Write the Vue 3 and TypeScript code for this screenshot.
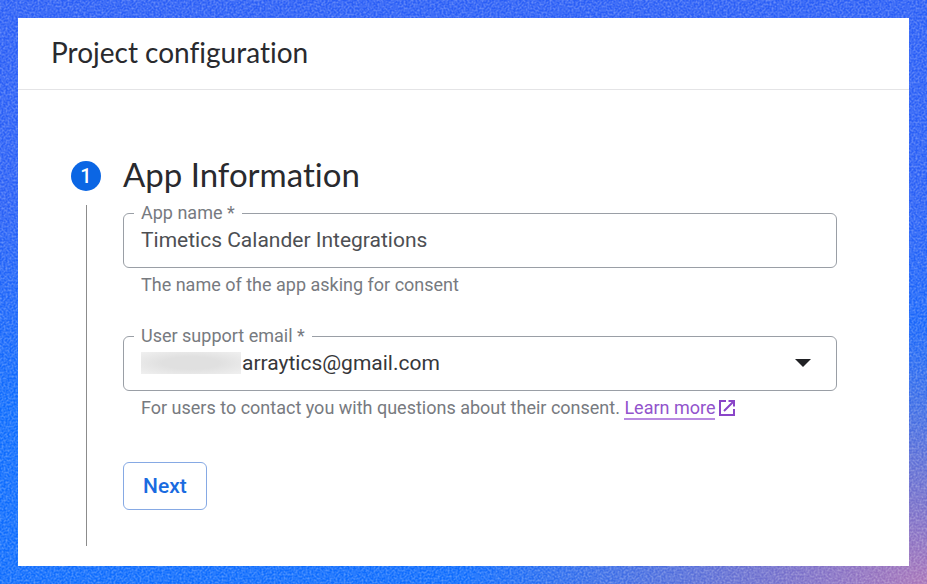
<script setup lang="ts">
import { ref } from 'vue'

const appName = ref('Timetics Calander Integrations')
const emails = ['arraytics@gmail.com']
const supportEmail = ref(emails[0])
</script>

<template>
  <div class="backdrop">
    <svg class="grain" aria-hidden="true">
      <filter id="grain" x="0" y="0" width="100%" height="100%">
        <feTurbulence type="fractalNoise" baseFrequency="0.5" numOctaves="2" />
        <feColorMatrix values="0 0 0 0 1  0 0 0 0 1  0 0 0 0 1  0.6 0 0 0 -0.2" />
      </filter>
      <rect width="100%" height="100%" filter="url(#grain)" />
    </svg>
    <main class="panel">
      <header class="bar">
        <h1>Project configuration</h1>
      </header>
      <form class="step" @submit.prevent>
        <div class="rail">
          <span class="badge">1</span>
          <span class="line"></span>
        </div>
        <div class="content">
          <h2>App Information</h2>
          <fieldset class="field">
            <legend><label for="app-name">App name *</label></legend>
            <div class="control">
              <input id="app-name" v-model="appName" type="text" />
            </div>
          </fieldset>
          <p class="hint">The name of the app asking for consent</p>
          <fieldset class="field">
            <legend><label for="email">User support email *</label></legend>
            <div class="control">
              <span class="hidden-part"></span>
              <select id="email" v-model="supportEmail">
                <option v-for="e in emails" :key="e">{{ e }}</option>
              </select>
              <svg class="arrow" viewBox="0 0 16 8" aria-hidden="true">
                <path d="M0 0h16L8 8z" />
              </svg>
            </div>
          </fieldset>
          <p class="hint">
            For users to contact you with questions about their consent.
            <a href="#"><span>Learn more</span><svg viewBox="0 0 18 18" aria-hidden="true">
              <path d="M8 2H2v14h14v-6M10.500 2H16v5.500M16 2 6 12" />
            </svg></a>
          </p>
          <button type="submit">Next</button>
        </div>
      </form>
    </main>
  </div>
</template>

<style>
body {
  margin: 0;
}
</style>

<style scoped>
.backdrop {
  position: relative;
  box-sizing: border-box;
  min-height: 100vh;
  padding: 18px;
  display: flex;
  background:
    radial-gradient(ellipse 50% 45% at 100% 100%, #a874b8 0%, rgba(122, 112, 200, 0.9) 35%, rgba(80, 115, 225, 0) 100%),
    linear-gradient(#2a5ef6 0%, #2a60f6 35%, #0e6cfe 70%, #0e6cfe 100%);
  font-family: Roboto, "Liberation Sans", sans-serif;
}
.grain {
  position: absolute;
  inset: 0;
  width: 100%;
  height: 100%;
}
.panel {
  position: relative;
  flex: 1;
  background: #fff;
}
.bar {
  padding: 17px 33px 19px;
  border-bottom: 1px solid #e4e4e6;
}
h1, h2 {
  margin: 0;
  color: #292a2e;
  font-family: Lato, Roboto, sans-serif;
  font-weight: 400;
  font-variant-ligatures: none;
}
h1 {
  font-size: 28px;
  line-height: 35px;
}
.step {
  display: flex;
  gap: 22px;
  padding: 63px 72px 19px 53px;
}
.rail {
  width: 30px;
  display: flex;
  flex-direction: column;
  align-items: center;
  gap: 14px;
  padding-top: 8px;
}
.badge {
  width: 30px;
  height: 30px;
  border-radius: 50%;
  background: #0b66e4;
  color: #fff;
  font-size: 20px;
  font-weight: 500;
  line-height: 30px;
  text-align: center;
}
.line {
  flex: 1;
  width: 1px;
  background: #8c8c8c;
}
.content {
  flex: 1;
  min-width: 0;
}
h2 {
  font-size: 33px;
  line-height: 42px;
  margin-bottom: 8px;
}
.field {
  margin: 0;
  padding: 0 10px;
  border: 1px solid #9a9fa6;
  border-radius: 6px;
  min-width: 0;
}
legend {
  padding: 0 7px;
  color: #777a80;
  font-size: 18px;
  line-height: 20px;
}
.control {
  display: flex;
  align-items: center;
  height: 44px;
  padding: 0 7px 10px;
  box-sizing: border-box;
}
input, select {
  flex: 1;
  min-width: 0;
  padding: 0;
  border: 0;
  outline: 0;
  background: transparent;
  color: #4d4f53;
  font: 400 21px/28px Roboto, "Liberation Sans", sans-serif;
}
select {
  appearance: none;
  color: #36373a;
}
.hidden-part {
  width: 100px;
  height: 22px;
  margin-right: 1px;
  background: radial-gradient(ellipse at center, #e0e0e0 40%, #f0f0f0 100%);
}
.arrow {
  width: 16px;
  height: 8px;
  margin-right: 8px;
  fill: #202124;
}
.hint {
  margin: 5px 18px 29px;
  color: #777a80;
  font-size: 18px;
  line-height: 24px;
}
a {
  color: #9253cc;
  text-decoration: none;
}
a span {
  border-bottom: 2px solid #b88ae0;
}
a svg {
  width: 18px;
  height: 18px;
  margin-left: 3px;
  vertical-align: -3px;
  fill: none;
  stroke: #8a45c8;
  stroke-width: 2;
}
button {
  display: block;
  height: 48px;
  margin: 42px 0 36px;
  padding: 0 19px;
  border: 1px solid #86a9e4;
  border-radius: 6px;
  background: #fff;
  color: #1a6be0;
  font: 500 21px/24px Roboto, "Liberation Sans", sans-serif;
}
</style>
